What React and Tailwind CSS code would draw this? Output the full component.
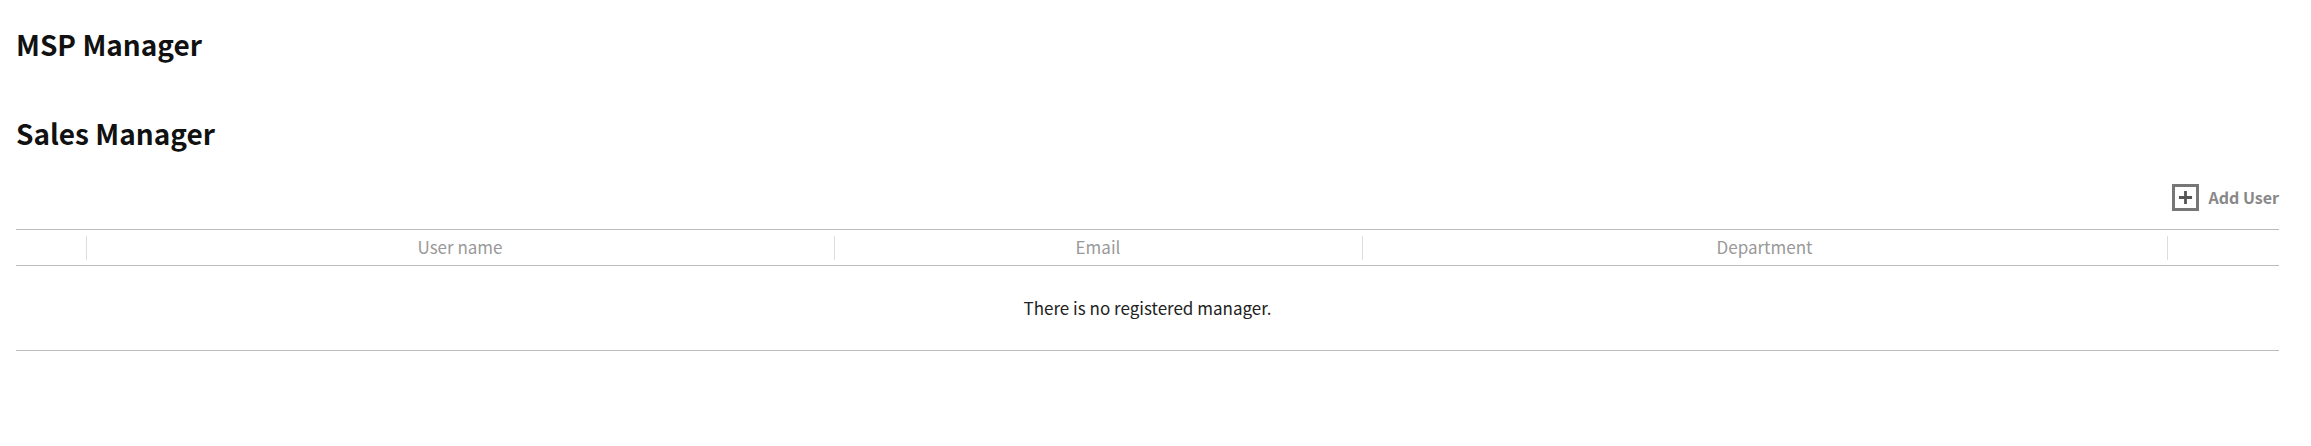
import React from 'react';

const columns = [
  { key: 'check', label: '' },
  { key: 'name', label: 'User name' },
  { key: 'email', label: 'Email' },
  { key: 'dept', label: 'Department' },
  { key: 'action', label: '' },
];

const ManagerSettings = () => {
  return (
    <div
      className="min-h-screen bg-white pl-4 pr-8 pt-[24px] text-[#111]"
      style={{ fontFamily: '"Noto Sans CJK KR", "Noto Sans", sans-serif' }}
    >
      <h2 className="text-[28px] font-bold leading-[40px]">MSP Manager</h2>

      <h2 className="mt-[49px] text-[28px] font-bold leading-[40px]">Sales Manager</h2>

      <div className="mt-[31px] flex justify-end">
        <button className="flex items-center gap-[9px] text-[16px] font-bold text-[#888] leading-[27px]">
          <span className="flex h-[27px] w-[27px] items-center justify-center border-[3px] border-[#777]">
            <svg className="h-[15px] w-[15px]" viewBox="0 0 16 16" fill="none" stroke="#555" strokeWidth="3">
              <path d="M8 1v14M1 8h14" />
            </svg>
          </span>
          <span>Add User</span>
        </button>
      </div>

      {/* table */}
      <div className="mt-[18px] border-t border-b border-[#bbb]">
        <div className="grid grid-cols-[70px_748px_528px_805px_1fr] h-[36px] border-b border-[#bbb]">
          {columns.map((col, i) => (
            <div key={col.key} className="relative flex items-center justify-center pb-[1px] text-[17px] text-[#999]">
              {i > 0 && <span className="absolute left-0 top-[6px] h-[24px] w-px bg-[#ddd]" />}
              {col.label}
            </div>
          ))}
        </div>
        <div className="flex h-[84px] items-center justify-center text-[17px] text-[#222]">
          There is no registered manager.
        </div>
      </div>
    </div>
  );
};

export default ManagerSettings;
